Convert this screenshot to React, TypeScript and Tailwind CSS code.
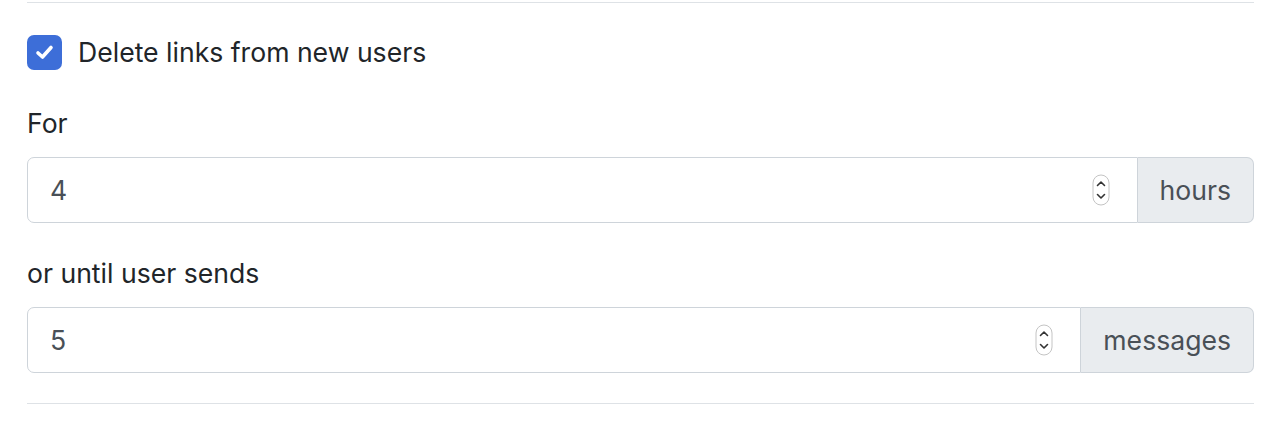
import React from "react";

function Spinner() {
  return (
    <svg width="18" height="32" viewBox="0 0 18 32" className="shrink-0">
      <rect x="1" y="1" width="16" height="30" rx="8" fill="#fff" stroke="#c4c4c4" strokeWidth="1" />
      <path d="M5.5 11.5 L9 8 L12.5 11.5" fill="none" stroke="#333" strokeWidth="1.6" strokeLinecap="round" strokeLinejoin="round" />
      <path d="M5.5 20.5 L9 24 L12.5 20.5" fill="none" stroke="#333" strokeWidth="1.6" strokeLinecap="round" strokeLinejoin="round" />
    </svg>
  );
}

function NumberGroup({ value, unit }: { value: string; unit: string }) {
  return (
    <div className="flex h-[66px] w-full">
      <div className="flex flex-1 items-center rounded-l-[7px] border border-[#ced4da] bg-white pl-[22px] pr-[27px]">
        <span className="flex-1 text-[#495057]">{value}</span>
        <Spinner />
      </div>
      <div className="flex items-center rounded-r-[7px] border border-l-0 border-[#ced4da] bg-[#e9ecef] px-[22px] text-[#495057]">
        {unit}
      </div>
    </div>
  );
}

export default function App() {
  return (
    <div
      className="min-h-[427px] bg-white pl-[27px] pr-[26px] pt-[2px] text-[26.6px] leading-[39px] text-[#212529]"
      style={{ fontFamily: "Inter, 'Liberation Sans', sans-serif" }}
    >
      <div className="h-px w-full bg-[#dee2e6]" />
      <div className="mt-[30px] flex items-center gap-[16px]">
        <div className="flex h-[35px] w-[35px] items-center justify-center rounded-[7px] bg-[#3d6ed8]">
          <svg width="35" height="35" viewBox="0 0 35 35">
            <path d="M11 18 L15.5 22 L24 12.5" fill="none" stroke="#fff" strokeWidth="3.6" strokeLinecap="round" strokeLinejoin="round" />
          </svg>
        </div>
        <span>Delete links from new users</span>
      </div>
      <div className="mt-[32px] mb-[14px]">For</div>
      <NumberGroup value="4" unit="hours" />
      <div className="mt-[31px] mb-[14px]">or until user sends</div>
      <NumberGroup value="5" unit="messages" />
      <div className="mt-[30px] h-px w-full bg-[#dee2e6]" />
    </div>
  );
}
